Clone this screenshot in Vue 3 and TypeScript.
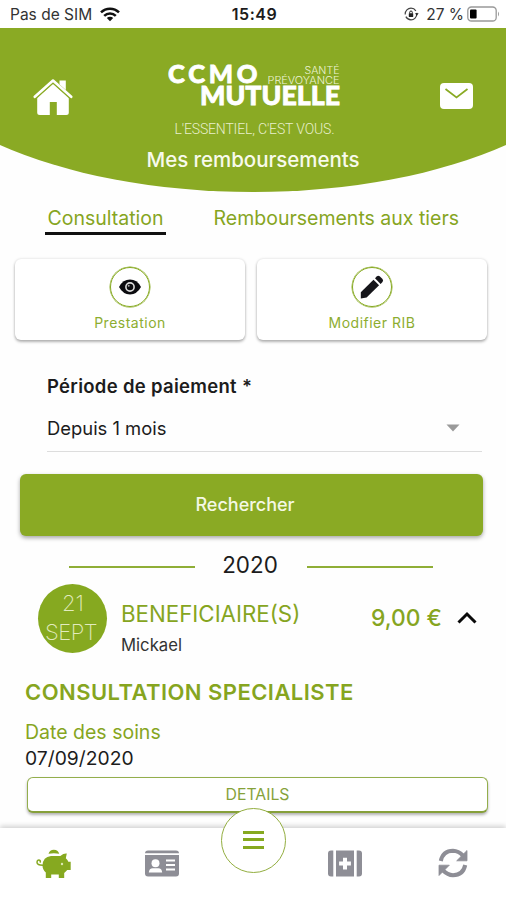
<script setup lang="ts">
import { ref } from 'vue'

interface Tab { id: string; label: string }
interface Line { day: string; month: string; name: string; amount: string; act: string; careDate: string }

const tabs: Tab[] = [
  { id: 'consultation', label: 'Consultation' },
  { id: 'tiers', label: 'Remboursements aux tiers' },
]
const active = ref('consultation')
const open = ref(true)
const line: Line = {
  day: '21',
  month: 'SEPT',
  name: 'Mickael',
  amount: '9,00 €',
  act: 'CONSULTATION SPECIALISTE',
  careDate: '07/09/2020',
}
</script>

<template>
  <div class="phone">
    <div class="status">
      <div class="status-left">
        <span class="carrier">Pas de SIM</span>
        <svg class="wifi" width="20" height="15" viewBox="0 0 20 15">
          <g fill="none" stroke="#111" stroke-width="2.5">
            <path d="M1 5.4 A12.8 12.8 0 0 1 19 5.4" />
            <path d="M4.2 8.8 A8.2 8.2 0 0 1 15.8 8.8" />
          </g>
          <path d="M10 14.2 L6.8 11.1 A4.6 4.6 0 0 1 13.2 11.1 Z" fill="#111" />
        </svg>
      </div>
      <span class="clock">15:49</span>
      <div class="status-right">
        <svg class="lock" width="15" height="14" viewBox="0 0 15 14">
          <circle cx="7" cy="7" r="5.8" fill="none" stroke="#444" stroke-width="1.2" stroke-dasharray="15 2.2" />
          <rect x="4.8" y="6.3" width="4.4" height="3.6" rx=".5" fill="#222" />
          <path d="M5.7 6.5V5.3a1.3 1.3 0 0 1 2.6 0v1.2" fill="none" stroke="#222" stroke-width="1" />
          <path d="M11 6.2h3.6l-1.8 2.6z" fill="#222" />
        </svg>
        <span class="percent">27 %</span>
        <svg class="battery" width="34" height="16" viewBox="0 0 34 16">
          <rect x=".8" y="1" width="28.4" height="14" rx="3.6" fill="#fff" stroke="#999" stroke-width="1.3" />
          <rect x="3" y="3.4" width="6.6" height="9.2" rx="1" fill="#000" />
          <path d="M31 5.5q2 2.5 0 5z" fill="#999" />
        </svg>
      </div>
    </div>

    <header class="header">
      <svg class="home" width="40" height="38" viewBox="0 0 40 38">
        <path d="M4.2 19.6 20 5.6l15.8 14V34.5q0 2.5-2.5 2.5H23.8V24h-7v13H6.7q-2.5 0-2.5-2.5z" fill="#fff" />
        <path d="M26.5 2.6h6.3v12.5l-6.3-5.6z" fill="#fff" />
        <path d="M1.6 19.7 20 3.2l18.4 16.5" fill="none" stroke="#8aaa24" stroke-width="4.2" />
        <path d="M1.8 18.8 20 2.5l18.2 16.3" fill="none" stroke="#fff" stroke-width="2.6" stroke-linecap="round" stroke-linejoin="round" />
      </svg>
      <svg class="logo" width="180" height="82" viewBox="163 56 180 82">
        <g class="logo-bold" fill="#fff" stroke="#fff">
          <text x="168" y="82.500" font-size="25.500" textLength="89.500" stroke-width=".8">CCMO</text>
          <text x="200" y="105" font-size="27" textLength="140" lengthAdjust="spacingAndGlyphs" stroke-width=".8">MUTUELLE</text>
        </g>
        <g class="logo-light" fill="#edf3d6">
          <text x="304.500" y="74" font-size="9.800" textLength="35" lengthAdjust="spacingAndGlyphs">SANTÉ</text>
          <text x="267.500" y="83.500" font-size="9.800" textLength="72" lengthAdjust="spacingAndGlyphs">PRÉVOYANCE</text>
        </g>
        <text class="tagline" x="174.500" y="133.500" font-size="14" fill="#e8efcc" textLength="160">L'ESSENTIEL, C'EST VOUS.</text>
      </svg>
      <svg class="mail" width="33" height="26" viewBox="0 0 33 26">
        <rect width="33" height="26" rx="4" fill="#fff" />
        <path d="M5.500 6 16.500 14.500 27.500 6" fill="none" stroke="#8aaa24" stroke-width="1.700" />
      </svg>
      <h1 class="title">Mes remboursements</h1>
    </header>

    <nav class="tabs">
      <button v-for="t in tabs" :key="t.id" class="tab" :class="{ on: t.id === active }" @click="active = t.id">{{ t.label }}</button>
    </nav>

    <section class="cards">
      <button class="card">
        <span class="ring">
          <svg width="22" height="16" viewBox="0 0 22 16">
            <path d="M0 8Q4 .6 11 .6T22 8Q18 15.400 11 15.400T0 8z" fill="#0c0c10" />
            <circle cx="11" cy="8" r="4.100" fill="#0c0c10" stroke="#ddd" stroke-width="1.600" />
            <circle cx="9.700" cy="6.700" r="1" fill="#aaa" />
          </svg>
        </span>
        <span class="card-label">Prestation</span>
      </button>
      <button class="card">
        <span class="ring">
          <svg width="24" height="24" viewBox="0 0 24 24">
            <path d="M.800 17.200 13.500 4.700l5.600 5.600L6.600 22.600.800 23.400z" fill="#15151a" />
            <path d="m15 3.300 1.700-1.900q1.500-1.400 3-.1l2.800 2.800q1.200 1.500 0 3l-1.900 1.800z" fill="#15151a" />
          </svg>
        </span>
        <span class="card-label">Modifier RIB</span>
      </button>
    </section>

    <section class="form">
      <label class="label">Période de paiement *</label>
      <div class="select">
        <span>Depuis 1 mois</span>
        <svg width="14" height="8" viewBox="0 0 14 8"><path d="M.500.500h13L7 7.500z" fill="#9a9a9a" /></svg>
      </div>
    </section>
    <button class="search">Rechercher</button>

    <div class="year"><i></i><span>2020</span><i></i></div>

    <section class="entry" @click="open = !open">
      <div class="date"><span class="day">{{ line.day }}</span><span class="month">{{ line.month }}</span></div>
      <div class="who">
        <div class="who-title">BENEFICIAIRE(S)</div>
        <div class="who-name">{{ line.name }}</div>
      </div>
      <div class="amount">{{ line.amount }}</div>
      <svg class="chevron" width="20" height="13" viewBox="0 0 20 13">
        <path d="M1.500 11.500 10 3l8.500 8.500" fill="none" stroke="#0a0a0a" stroke-width="3" />
      </svg>
    </section>

    <section v-if="open" class="detail">
      <h2 class="act">{{ line.act }}</h2>
      <div class="care">Date des soins</div>
      <div class="care-date">{{ line.careDate }}</div>
      <button class="details">DETAILS</button>
    </section>

    <footer class="bottom">
      <svg class="pig" width="36" height="32" viewBox="0 0 36 32">
        <g fill="#86a920">
          <path d="M12.500 5.800A5.600 5.600 0 0 1 23.200 5.800Q18 4.600 12.500 5.800z" />
          <path d="M15 8h9.300q3.700-2.900 6.500-2.400l-1 4.700q2 1.800 2.500 3.500h2.400v8.300h-3.500q-1.300 1.700-3 2.900V30h-5.400v-3.500h-7.600V30H9.800v-5.500q-3.300-3-3.300-7.100Q6.800 9 15 8z" />
        </g>
        <path d="M7 17.200Q1 17.300 1 14.200q.2-2.600 2.600-2 1.400.9.200 2.300" fill="none" stroke="#86a920" stroke-width="1.500" />
        <circle cx="26" cy="16" r="1.200" fill="#dce8b4" />
      </svg>
      <svg class="idcard" width="34" height="27" viewBox="0 0 34 27">
        <path d="M0 3.500Q0 .500 3 .500h28q3 0 3 3z" fill="#8e8e96" />
        <path d="M0 5h34v18.500q0 3-3 3H3q-3 0-3-3z" fill="#8e8e96" />
        <g fill="#fff">
          <path d="M0 3.500h34v1.200H0z" />
          <circle cx="10.500" cy="13.300" r="4" />
          <path d="M3.800 22.500q.3-4.300 4-4.300h5.400q3.700 0 4 4.300z" />
          <path d="M21 9.500h9v2h-9zM21 14h9v2h-9zM21 18.400h9v2h-9z" />
        </g>
      </svg>
      <button class="fab" aria-label="Menu"><i></i><i></i><i></i></button>
      <svg class="kit" width="34" height="27" viewBox="0 0 34 27">
        <g fill="#8e8e96">
          <path d="M3 .500h2.300v26H3q-3 0-3-3v-20q0-3 3-3zM31 .500h-2.300v26H31q3 0 3-3v-20q0-3-3-3zM8 .500h18v26H8z" />
        </g>
        <path d="M15 7.800h4v3.800h3.900v4H19v3.900h-4v-3.900h-3.900v-4H15z" fill="#fff" />
      </svg>
      <svg class="sync" width="30" height="30" viewBox="0 0 30 30">
        <g fill="none" stroke="#8e8e96" stroke-width="4">
          <path d="M2.800 13Q4.800 3 15 2.800q5.500.2 9.800 4.700" />
          <path d="M27.200 17Q25.200 27 15 27.200q-5.500-.2-9.800-4.700" />
        </g>
        <path d="M29 2.500v10.300H18.700zM1 27.500V17.200h10.300z" fill="#8e8e96" stroke="#8e8e96" stroke-width=".8" stroke-linejoin="round" />
      </svg>
    </footer>
  </div>
</template>

<style>
body { margin: 0; background: #fff; overflow: hidden; }
</style>

<style scoped>
* { box-sizing: border-box; }
.phone { width: 506px; height: 900px; display: flex; flex-direction: column; background: #fefefe; font-family: Inter, "Liberation Sans", sans-serif; color: #1c1c1c; overflow: hidden; white-space: nowrap; }
button { font-family: inherit; margin: 0; padding: 0; border: 0; background: none; }
svg { display: block; flex: none; }

.status { height: 28px; flex: none; display: grid; grid-template-columns: 1fr auto 1fr; align-items: center; padding: 0 5px 0 10px; background: #fff; font-size: 15.500px; }
.status-left { display: flex; align-items: center; gap: 8px; }
.carrier { color: #333; }
.clock { font-weight: 600; letter-spacing: .5px; font-size: 16px; margin-left: -2px; }
.status-right { display: flex; align-items: center; justify-content: flex-end; }
.percent { margin: 0 3px 0 7px; color: #333; }

.header { height: 164px; flex: none; background: #8aaa24; clip-path: ellipse(361px 164px at 50% 0); display: grid; grid-template-columns: 163px 180px 1fr; grid-template-rows: 116px 48px; }
.home { margin: 50px 0 0 33px; }
.logo { margin-top: 28px; }
.mail { margin: 55px 0 0 97px; }
.logo-bold { font-family: Lato, sans-serif; font-weight: 900; }
.logo-light { font-family: Inter, sans-serif; font-weight: 300; }
.tagline { font-family: Roboto, sans-serif; font-weight: 300; }
.title { grid-column: 1 / -1; margin: 3px 0 0; text-align: center; font-size: 20.500px; line-height: 26px; font-weight: 500; color: #f8faec; letter-spacing: -.05px; }

.tabs { display: flex; flex: none; gap: 45px; height: 43px; margin: 0 0 0 45px; align-items: stretch; }
.tab { height: 43px; padding: 12px 2.500px 0; border-bottom: 3px solid transparent; font-size: 19.500px; line-height: 26px; color: #86a51f; text-align: left; }
.tab.on { border-color: #111; }

.cards { display: flex; flex: none; gap: 12px; margin: 24px 0 0 15px; }
.card { width: 230px; height: 81px; border-radius: 6px; background: #fff; box-shadow: 0 2px 3px rgba(0,0,0,.28), 0 0 3px rgba(0,0,0,.14); display: flex; flex-direction: column; align-items: center; }
.ring { width: 40px; height: 40px; margin-top: 8px; border: 1px solid #86a920; border-radius: 50%; display: flex; align-items: center; justify-content: center; box-shadow: 0 0 0 .500px #86a920; }
.card-label { margin-top: 7px; font-size: 14px; line-height: 18px; letter-spacing: .5px; color: #8dad30; }

.form { flex: none; margin: 34px 24px 0 47px; }
.label { display: block; font-size: 18.500px; line-height: 24px; font-weight: 600; letter-spacing: .3px; }
.select { height: 54px; border-bottom: 1px solid #ddd; display: flex; align-items: center; justify-content: space-between; padding: 7px 22px 0 0; font-size: 18.400px; }
.search { flex: none; width: 463px; height: 62px; margin: 22px 0 0 19.500px; border-radius: 6px; background: #8aaa24; box-shadow: 0 2px 4px rgba(0,0,0,.35); color: #f4f8e4; font-size: 18px; font-weight: 500; padding: 0 12px 1px 0; }

.year { flex: none; display: flex; align-items: center; gap: 28px; width: 364px; margin: 14px 0 0 69px; height: 30px; font-size: 22.400px; }
.year span { margin: -2px 1px 0 -1px; }
.year i { flex: 1; height: 1.500px; background: #8fae36; margin-top: 4px; }

.entry { flex: none; display: flex; margin: 4px 0 0 38px; height: 69px; }
.date { width: 69px; height: 69px; border-radius: 50%; background: #86a920; display: flex; flex-direction: column; padding: 5px 0 0 7px; font-size: 22px; font-weight: 200; color: #e2ebbf; }
.date span { line-height: 29px; }
.day { padding-left: 17px; }
.month { letter-spacing: -.5px; }
.who { width: 264px; padding: 16px 0 0 14px; }
.who-title { font-size: 22.300px; line-height: 28px; color: #86a51f; }
.who-name { font-size: 16.700px; line-height: 22px; margin-top: 6px; color: #333; }
.amount { width: 86px; padding-top: 20px; font-size: 22.800px; line-height: 28px; font-weight: 500; color: #86a51f; }
.chevron { margin: 27px 0 0 0; }

.detail { flex: none; margin: 25px 0 0 25px; display: flex; flex-direction: column; }
.act { margin: 0; font-size: 22px; line-height: 28px; font-weight: 600; letter-spacing: .45px; color: #86a51f; }
.care { margin-top: 13px; font-size: 19.500px; line-height: 26px; color: #86a51f; }
.care-date { font-size: 19.300px; line-height: 26px; }
.details { width: 461px; height: 36px; margin: 6px 0 0 2px; padding-bottom: 1px; border: 1.500px solid #93ae4c; border-bottom: 2px solid #86a03a; border-radius: 6px; background: #fff; box-shadow: 0 2px 3px rgba(0,0,0,.3); font-size: 15.800px; color: #86a23a; }

.bottom { flex: none; height: 73px; margin-top: 15px; background: #fff; box-shadow: 0 -2px 5px rgba(0,0,0,.18); display: flex; align-items: flex-start; padding-left: 36px; }
.pig { margin-top: 20px; }
.idcard { margin: 22px 0 0 73px; }
.fab { width: 65px; height: 65px; margin: -20px 0 0 42px; border: 1.300px solid #93ae40; border-radius: 50%; background: #fff; display: flex; flex-direction: column; align-items: center; justify-content: center; gap: 4.500px; flex: none; padding-bottom: 2px; }
.fab i { width: 21px; height: 3px; background: #86a920; }
.kit { margin: 22px 0 0 42px; }
.sync { margin: 20px 0 0 76px; }
</style>
